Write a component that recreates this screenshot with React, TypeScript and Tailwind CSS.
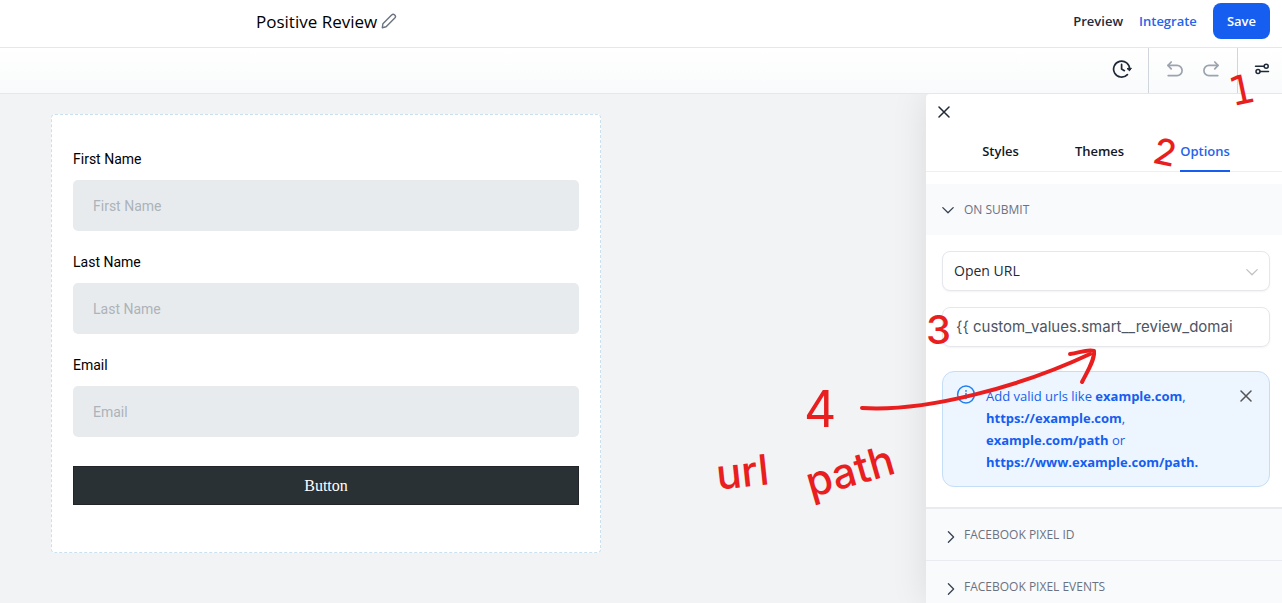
import { useState } from "react";
import type { ReactNode } from "react";

const FIELDS = [
  { id: "first-name", label: "First Name" },
  { id: "last-name", label: "Last Name" },
  { id: "email", label: "Email" },
];

const TABS = ["Styles", "Themes", "Options"];

function PencilIcon() {
  return (
    <svg
      className="w-4 h-4"
      viewBox="0 0 16 16"
      fill="none"
      stroke="#6b7280"
      strokeWidth="1.4"
      strokeLinejoin="round"
    >
      <path d="M1.3 14.7l.6-3.9L10.6 2a2.1 2.1 0 0 1 3.2 3L5.1 13.8z" />
    </svg>
  );
}

function HistoryIcon() {
  return (
    <svg
      className="w-5 h-5"
      viewBox="0 0 20 20"
      fill="none"
      stroke="#1f2937"
      strokeWidth="1.7"
      strokeLinecap="round"
      strokeLinejoin="round"
    >
      <path d="M17.6 10.4A8 8 0 1 0 15.4 15.6" />
      <path d="M9.6 5.4v4.7l2.8 1.6" />
      <path d="M15.3 9.8l2.2 2 1.7-2.2z" fill="#1f2937" strokeWidth="1" />
    </svg>
  );
}

function UndoIcon({ flip = false }: { flip?: boolean }) {
  return (
    <svg
      className={flip ? "w-4 h-4 -scale-x-100" : "w-4 h-4"}
      viewBox="0 0 16 16"
      fill="none"
      stroke="#9ca3af"
      strokeWidth="1.7"
      strokeLinecap="round"
      strokeLinejoin="round"
    >
      <path d="M4.2 1L1 4.4l3.2 3.4" />
      <path d="M1.2 4.4H10a5.1 5.1 0 0 1 0 10.2H1.2" />
    </svg>
  );
}

function SlidersIcon() {
  return (
    <svg
      className="w-4 h-4"
      viewBox="0 0 16 16"
      fill="none"
      stroke="#1f2937"
      strokeWidth="1.5"
      strokeLinecap="round"
    >
      <path d="M1.5 5.2h8.6M6.2 10.6h8.3" />
      <circle cx="12.2" cy="5.2" r="2" />
      <circle cx="4" cy="10.6" r="2" />
    </svg>
  );
}

function CloseIcon({ color }: { color: string }) {
  return (
    <svg className="w-3 h-3" viewBox="0 0 12 12" stroke={color} strokeWidth="1.5" strokeLinecap="round">
      <path d="M1 1l10 10M11 1L1 11" />
    </svg>
  );
}

function Chevron({ open = false, color = "#374151" }: { open?: boolean; color?: string }) {
  return (
    <svg
      className="w-3 h-3 overflow-visible"
      viewBox="0 0 12 12"
      fill="none"
      stroke={color}
      strokeWidth="1.3"
      strokeLinecap="round"
      strokeLinejoin="round"
    >
      <path d={open ? "M.8 3.6L6 8.8l5.2-5.2" : "M6.4 2.8l5.2 5.2-5.2 5.2"} />
    </svg>
  );
}

function InfoIcon() {
  return (
    <svg className="w-5 h-5 shrink-0" viewBox="0 0 20 20" fill="none" stroke="#2080f0" strokeWidth="1.5">
      <circle cx="10" cy="9.5" r="8.4" />
      <path d="M10 8.5v5" strokeLinecap="round" />
      <circle cx="10" cy="5.9" r=".9" fill="#2080f0" stroke="none" />
    </svg>
  );
}

function Header() {
  return (
    <header className="flex items-center justify-between bg-white border-b border-gray-200 pt-[3px] pb-2 pl-64 pr-3">
      <div className="flex items-center gap-1">
        <h1 className="pt-px text-[17px] leading-6 text-black">Positive Review</h1>
        <button type="button" aria-label="Rename form">
          <PencilIcon />
        </button>
      </div>
      <div className="flex items-center gap-4 text-[13px] font-semibold">
        <a href="#preview" className="pt-px text-gray-800">
          Preview
        </a>
        <a href="#integrate" className="pt-px text-[#2563eb]">
          Integrate
        </a>
        <button type="button" className="h-9 px-[14px] pt-px rounded-lg bg-[#155eef] text-white">
          Save
        </button>
      </div>
    </header>
  );
}

function Toolbar() {
  return (
    <div className="flex items-stretch justify-end h-[46px] bg-linear-to-b from-white to-gray-50 border-b border-gray-200">
      <button type="button" aria-label="Version history" className="px-4 pb-[3px]">
        <HistoryIcon />
      </button>
      <div className="flex items-center gap-5 px-[18px] pb-1 border-x border-gray-300">
        <button type="button" aria-label="Undo">
          <UndoIcon />
        </button>
        <button type="button" aria-label="Redo">
          <UndoIcon flip />
        </button>
      </div>
      <button type="button" aria-label="Form settings" className="pl-4 pr-3 pb-[3px]">
        <SlidersIcon />
      </button>
    </div>
  );
}

function FormPreview() {
  return (
    <form
      className="w-[550px] bg-white border border-dashed border-[#c9e0ee] rounded px-[21px] pt-[33px] pb-[47px] font-['Roboto',sans-serif] text-sm"
      onSubmit={(e) => e.preventDefault()}
    >
      <div className="flex flex-col gap-5">
        {FIELDS.map((field) => (
          <div key={field.id} className="flex flex-col gap-[10px]">
            <label htmlFor={field.id} className="leading-[22px] text-black">
              {field.label}
            </label>
            <input
              id={field.id}
              placeholder={field.label}
              className="w-full h-[51px] px-5 rounded-[5px] bg-[#e8ebee] placeholder:text-[#acb3b9]"
            />
          </div>
        ))}
      </div>
      <button
        type="submit"
        className="mt-[29px] w-full h-[39px] bg-[#2a3135] border border-[#212529] text-white font-['Liberation_Serif',serif] text-base"
      >
        Button
      </button>
    </form>
  );
}

function SectionHeader({ title, open = false }: { title: string; open?: boolean }) {
  return (
    <button
      type="button"
      aria-expanded={open}
      className="flex items-center w-full h-[51px] px-4 gap-[10px] bg-gray-50 text-xs font-medium text-gray-500"
    >
      <Chevron open={open} />
      {title}
    </button>
  );
}

function UrlHint({ onClose }: { onClose: () => void }) {
  return (
    <div className="flex items-start rounded-xl bg-[#edf5fe] border border-[#c5def8] pl-[13px] pr-[17px] py-[13px] text-[13px] leading-[22px] text-[#155eef]">
      <InfoIcon />
      <p className="flex-1 pl-[10px]">
        Add valid urls like <b>example.com</b>,<br />
        <b>https://example.com</b>,<br />
        <b>example.com/path</b> or
        <br />
        <b>https://www.example.com/path.</b>
      </p>
      <button type="button" aria-label="Dismiss" className="pt-[5px]" onClick={onClose}>
        <CloseIcon color="#555555" />
      </button>
    </div>
  );
}

function OptionsPanel() {
  const [tab, setTab] = useState("Options");
  const [showHint, setShowHint] = useState(true);

  return (
    <aside className="w-[356px] shrink-0 rounded-tl-sm bg-white shadow-[0_0_36px_rgba(0,0,0,0.1)]">
      <div className="px-3 pt-3">
        <button type="button" aria-label="Close panel" className="block pb-[6px]">
          <CloseIcon color="#1f2937" />
        </button>
      </div>
      <div
        role="tablist"
        className="flex justify-center gap-14 pt-[17px] pl-1 border-b border-[#efeff2] text-[13px] font-semibold"
      >
        {TABS.map((name) => (
          <button
            key={name}
            type="button"
            role="tab"
            aria-selected={tab === name}
            onClick={() => setTab(name)}
            className={
              tab === name
                ? "-mb-px pb-[9px] leading-5 border-b-2 border-[#155eef] text-[#2563eb]"
                : "-mb-px pb-[9px] leading-5 border-b-2 border-transparent text-gray-900"
            }
          >
            {name}
          </button>
        ))}
      </div>

      <div className="pt-3">
        <SectionHeader title="ON SUBMIT" open />
        <div className="flex flex-col gap-4 pl-4 pr-3 pt-4 pb-5">
          <div className="relative">
            <select
              aria-label="On submit action"
              className="appearance-none w-full h-10 pl-[11px] pr-8 rounded-lg border border-gray-200 bg-white shadow-xs text-sm text-gray-800"
            >
              <option>Open URL</option>
              <option>Message</option>
            </select>
            <span className="absolute right-3 top-[15px] pointer-events-none">
              <Chevron open color="#c2c2c2" />
            </span>
          </div>
          <input
            aria-label="Redirect URL"
            defaultValue="{{ custom_values.smart__review_domai"
            className="w-full h-10 px-[13px] pb-px rounded-lg border border-gray-200 shadow-xs font-['Inter',sans-serif] text-[15px] text-gray-600"
          />
          {showHint && (
            <div className="pt-2">
              <UrlHint onClose={() => setShowHint(false)} />
            </div>
          )}
        </div>
        <div className="border-t-2 border-[#eaebf0]">
          <SectionHeader title="FACEBOOK PIXEL ID" />
        </div>
        <div className="border-t border-[#eaebf0]">
          <SectionHeader title="FACEBOOK PIXEL EVENTS" />
        </div>
      </div>
    </aside>
  );
}

function Note({ className, children }: { className: string; children: ReactNode }) {
  return <span className={`absolute font-medium ${className}`}>{children}</span>;
}

// Red pen notes laid over the editor
function Annotations() {
  return (
    <div className="absolute inset-0 overflow-hidden pointer-events-none font-['Inter',sans-serif] text-[#e91e1e]">
      <Note className="left-[1229px] top-[70px] text-[40px] leading-none -rotate-12 font-['DejaVu_Sans',sans-serif]">
        1
      </Note>
      <Note className="left-[1154px] top-[134px] text-[36px] leading-none rotate-12">2</Note>
      <Note className="left-[926px] top-[310px] text-[40px] leading-none">3</Note>
      <Note className="left-[804px] top-[390px] text-[50px] leading-[38px] font-normal">4</Note>
      <Note className="left-[716px] top-[451px] text-[42px] leading-none -rotate-6">url</Note>
      <Note className="left-[805px] top-[456px] text-[42px] leading-[30px] -rotate-[16deg]">path</Note>
      <svg
        className="absolute left-[856px] top-[344px] w-[244px] h-[70px]"
        viewBox="856 344 244 70"
        fill="none"
        stroke="currentColor"
        strokeWidth="4"
        strokeLinecap="round"
        strokeLinejoin="round"
      >
        <path d="M862 408C925 412 1020 387 1090 354" />
        <path d="M1070 354C1079 353 1087 349 1094 351C1095 360 1087 372 1082 382" />
      </svg>
    </div>
  );
}

export default function App() {
  return (
    <div className="relative flex flex-col h-screen overflow-hidden bg-[#f2f3f5] font-['Open_Sans','Noto_Sans',sans-serif]">
      <Header />
      <Toolbar />
      <main className="flex flex-1 min-h-0 justify-between overflow-hidden">
        <div className="pl-[51px] pt-5">
          <FormPreview />
        </div>
        <OptionsPanel />
      </main>
      <Annotations />
    </div>
  );
}
